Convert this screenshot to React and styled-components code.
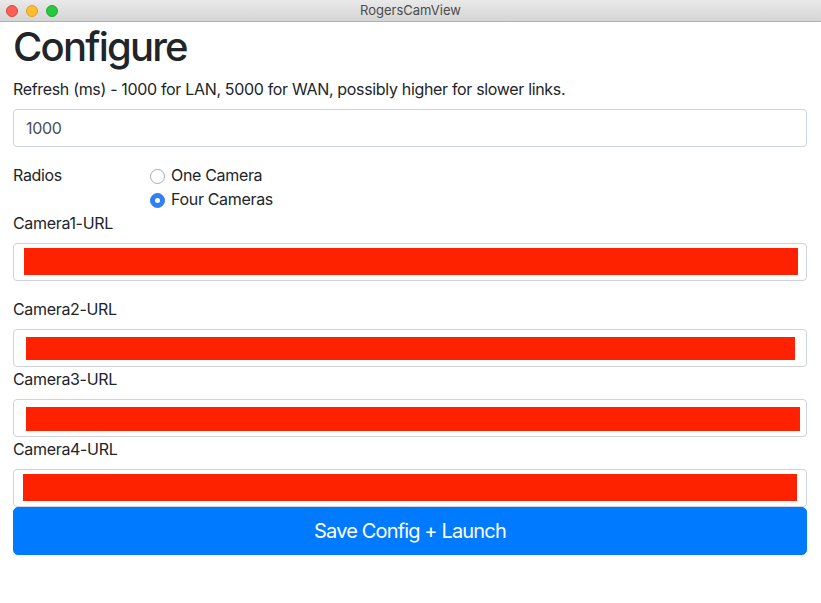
import React, { useState } from 'react';
import styled, { createGlobalStyle } from 'styled-components';

const GlobalStyle = createGlobalStyle`
  html, body {
    margin: 0;
    padding: 0;
    background: #fff;
  }
  body {
    font-family: Inter, "Noto Sans", "Liberation Sans", sans-serif;
    color: #212529;
    font-size: 16px;
    line-height: 1.5;
    letter-spacing: -0.33px;
  }
  * {
    box-sizing: border-box;
  }
`;

const cameras = [
  { id: 1, gap: true, pad: '4px 8px 5px 10px' },
  { id: 2, gap: false, pad: '7px 11px 6px 12px' },
  { id: 3, gap: false, pad: '7px 6px 5px 12px' },
  { id: 4, gap: false, pad: '4px 9px 5px 9px' },
];

function App() {
  const [refresh, setRefresh] = useState('1000');
  const [mode, setMode] = useState('four');

  return (
    <Window>
      <GlobalStyle />
      <TitleBar>
        <Lights>
          <Light color="#fe5f57" edge="#e0443e" />
          <Light color="#febc2e" edge="#dea123" />
          <Light color="#28c840" edge="#1aab29" />
        </Lights>
        <Title>RogersCamView</Title>
      </TitleBar>

      <Page>
        <Heading>Configure</Heading>

        <Group>
          <Label>Refresh (ms) - 1000 for LAN, 5000 for WAN, possibly higher for slower links.</Label>
          <Input value={refresh} onChange={(e) => setRefresh(e.target.value)} />
        </Group>

        <RadioRow>
          <RadioTitle>Radios</RadioTitle>
          <RadioList>
            <RadioOption>
              <Radio checked={mode === 'one'} onClick={() => setMode('one')} />
              One Camera
            </RadioOption>
            <RadioOption>
              <Radio checked={mode === 'four'} onClick={() => setMode('four')} />
              Four Cameras
            </RadioOption>
          </RadioList>
        </RadioRow>

        {cameras.map((cam) => (
          <CameraGroup key={cam.id} gap={cam.gap}>
            <Label>Camera{cam.id}-URL</Label>
            <UrlBox pad={cam.pad}>
              <Redacted />
            </UrlBox>
          </CameraGroup>
        ))}

        <Button>Save Config + Launch</Button>
      </Page>
    </Window>
  );
}

const Window = styled.div`
  width: 100%;
  min-height: 603px;
  background: #fff;
`;

const TitleBar = styled.div`
  height: 22px;
  display: flex;
  align-items: center;
  justify-content: center;
  position: relative;
  background: linear-gradient(#e9e9e9, #d5d5d5);
  border-bottom: 1px solid #b0b0b0;
`;

const Lights = styled.div`
  position: absolute;
  left: 6px;
  top: 5px;
  display: flex;
  gap: 8px;
`;

const Light = styled.span`
  width: 12px;
  height: 12px;
  border-radius: 50%;
  background: ${(p) => p.color};
  border: 0.5px solid ${(p) => p.edge};
`;

const Title = styled.div`
  font-family: Inter, "Liberation Sans", sans-serif;
  font-size: 13px;
  letter-spacing: 0;
  color: #4c4c4c;
  line-height: 1;
`;

const Page = styled.div`
  padding: 0 14px 0 13px;
`;

const Heading = styled.h1`
  margin: 1px 0 6px;
  font-size: 40px;
  font-weight: 500;
  line-height: 1.2;
  letter-spacing: -1.8px;
`;

const Group = styled.div`
  margin-bottom: 16px;
`;

const Label = styled.div`
  margin-bottom: 8px;
  font-size: 16px;
  line-height: 24px;
`;

const Input = styled.input`
  display: block;
  width: 100%;
  height: 38px;
  padding: 6px 12px;
  font-family: inherit;
  font-size: 16px;
  letter-spacing: inherit;
  line-height: 1.5;
  color: #495057;
  background: #fff;
  border: 1px solid #ced4da;
  border-radius: 4px;
  outline: none;
`;

const RadioRow = styled.div`
  display: flex;
`;

const RadioTitle = styled.div`
  width: 137px;
  line-height: 24px;
`;

const RadioList = styled.div`
  display: flex;
  flex-direction: column;
`;

const RadioOption = styled.label`
  display: flex;
  align-items: center;
  gap: 6px;
  line-height: 24px;
  cursor: pointer;
`;

const Radio = styled.span`
  width: 15px;
  height: 15px;
  border-radius: 50%;
  flex-shrink: 0;
  margin-top: 2px;
  background: ${(p) => (p.checked ? '#2f7ff6' : '#fff')};
  border: 1px solid ${(p) => (p.checked ? '#2f7ff6' : '#a9a9a9')};
  display: flex;
  align-items: center;
  justify-content: center;

  &::after {
    content: '';
    width: 5px;
    height: 5px;
    border-radius: 50%;
    background: #fff;
    display: ${(p) => (p.checked ? 'block' : 'none')};
  }
`;

const CameraGroup = styled.div`
  margin-bottom: ${(p) => (p.gap ? '16px' : '0')};
`;

const UrlBox = styled.div`
  height: 38px;
  display: flex;
  padding: ${(p) => p.pad};
  border: 1px solid #ced4da;
  border-radius: 4px;
  background: #fff;
`;

const Redacted = styled.div`
  flex: 1;
  background: #ff2200;
`;

const Button = styled.button`
  display: block;
  width: 100%;
  height: 48px;
  padding: 8px 16px;
  font-family: inherit;
  font-size: 20px;
  letter-spacing: -0.85px;
  line-height: 1.5;
  color: #fff;
  background: #007bff;
  border: 1px solid #007bff;
  border-radius: 5px;
  cursor: pointer;
`;

export default App;
